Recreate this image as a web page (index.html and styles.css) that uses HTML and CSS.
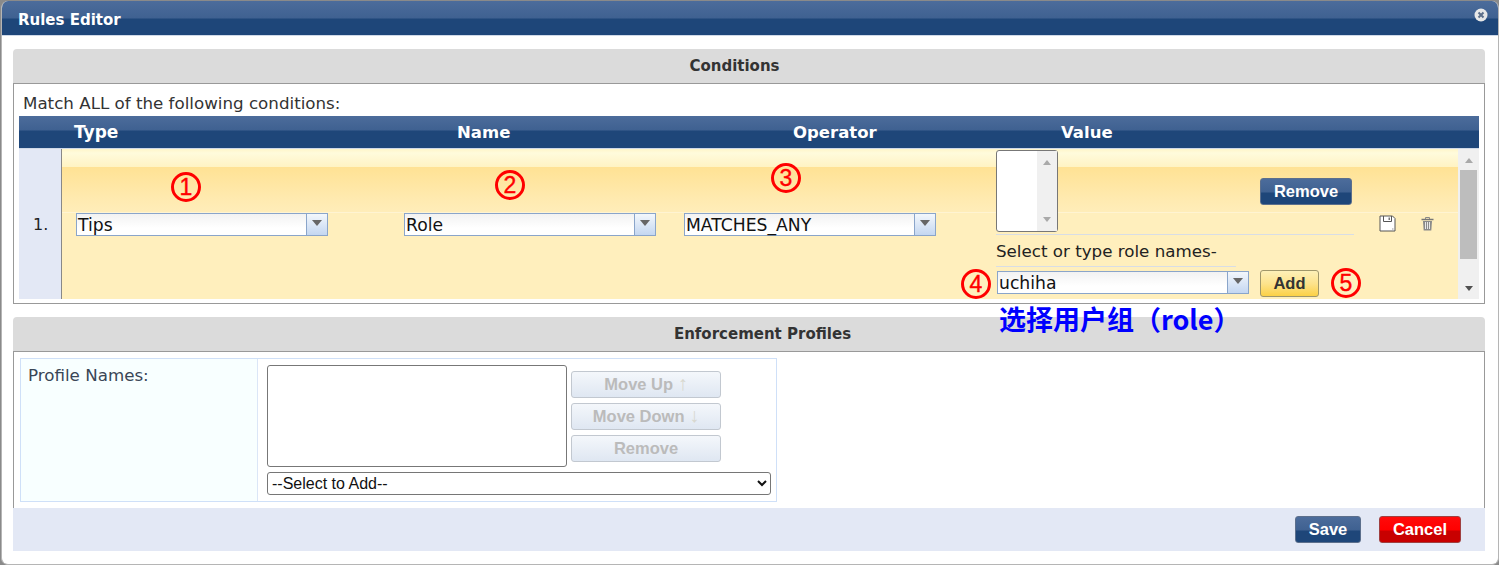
FILE: index.html
```html
<!DOCTYPE html>
<html lang="en">

<head>
    <meta charset="UTF-8">
    <meta name="viewport" content="width=device-width, initial-scale=1.0">
    <title>Rules Editor</title>
    <link rel="stylesheet" href="styles.css">
</head>

<body>
    <div class="dialog">
        <div class="title-bar">
            <span class="title">Rules Editor</span>
            <svg class="close-icon" width="14" height="14" viewBox="0 0 14 14">
                <circle cx="7" cy="7" r="6.5" fill="#e8e8e8" />
                <path d="M4.5 4.5l5 5M9.500 4.500l-5 5" stroke="#5d6f8a" stroke-width="2" />
            </svg>
        </div>

        <div class="section section-conditions">
            <div class="section-head">Conditions</div>
            <div class="section-body">
                <div class="match-text">Match ALL of the following conditions:</div>
                <div class="table-head">
                    <span class="th th-type">Type</span>
                    <span class="th th-name">Name</span>
                    <span class="th th-operator">Operator</span>
                    <span class="th">Value</span>
                </div>
                <div class="rule-row">
                    <div class="row-number">1.</div>
                    <div class="rule-cells">
                        <div class="cell cell-type">
                            <div class="combo"><span class="combo-text">Tips</span><span class="combo-arrow"></span></div>
                        </div>
                        <div class="cell cell-name">
                            <div class="combo"><span class="combo-text">Role</span><span class="combo-arrow"></span></div>
                        </div>
                        <div class="cell cell-operator">
                            <div class="combo"><span class="combo-text">MATCHES_ANY</span><span class="combo-arrow"></span></div>
                        </div>
                        <div class="cell-value">
                            <div class="value-top">
                                <div class="value-list">
                                    <div class="list-scroll">
                                        <span class="tri-up"></span>
                                        <span class="tri-down"></span>
                                    </div>
                                </div>
                                <button class="btn btn-blue btn-remove">Remove</button>
                            </div>
                            <div class="value-label">Select or type role names-</div>
                            <div class="value-add">
                                <div class="combo"><span class="combo-text">uchiha</span><span class="combo-arrow"></span></div>
                                <button class="btn btn-add">Add</button>
                            </div>
                        </div>
                        <div class="cell-icons">
                            <svg width="17" height="17" viewBox="0 0 17 17">
                                <path d="M1 1h12.500l2.500 2.500v12.500h-15z" fill="#fff" stroke="#555" />
                                <path d="M4.500 1v5.500h8v-5.500" fill="none" stroke="#555" />
                                <path d="M9.500 2.500v2.500h1.500v-2.500z" fill="#777" />
                                <path d="M13 14h1.500" stroke="#999" />
                            </svg>
                            <svg width="13" height="14" viewBox="0 0 13 14">
                                <path d="M0.500 2.500h12" stroke="#777" stroke-width="1.500" />
                                <path d="M4.500 2v-1.500h4v1.500" fill="none" stroke="#888" />
                                <path d="M2 4h9l-0.700 9.500h-7.600z" fill="#8a8a8a" />
                                <path d="M4.500 5v7M6.500 5v7M8.500 5v7" stroke="#e8e8e8" />
                            </svg>
                        </div>
                    </div>
                    <div class="row-scroll">
                        <span class="tri-up"></span>
                        <span class="row-thumb"></span>
                        <span class="tri-down tri-dark"></span>
                    </div>

                    <span class="mark mark-1">1</span>
                    <span class="mark mark-2">2</span>
                    <span class="mark mark-3">3</span>
                    <span class="mark mark-4">4</span>
                    <span class="mark mark-5">5</span>
                    <span class="role-note">选择用户组（role）</span>
                </div>
            </div>
        </div>

        <div class="section section-profiles">
            <div class="section-head">Enforcement Profiles</div>
            <div class="section-body profiles-body">
                <div class="profile-table">
                    <div class="profile-label">Profile Names:</div>
                    <div class="profile-field">
                        <div class="profile-top">
                            <div class="profile-list"></div>
                            <div class="profile-buttons">
                                <button class="btn btn-off">Move Up <span class="arrow-glyph">↑</span></button>
                                <button class="btn btn-off">Move Down <span class="arrow-glyph">↓</span></button>
                                <button class="btn btn-off">Remove</button>
                            </div>
                        </div>
                        <select class="profile-select">
                            <option>--Select to Add--</option>
                        </select>
                    </div>
                </div>
            </div>
        </div>

        <div class="footer">
            <button class="btn btn-blue btn-save">Save</button>
            <button class="btn btn-red">Cancel</button>
        </div>
    </div>
</body>

</html>
```

FILE: styles.css
```css
html,
body {
    margin: 0;
    height: 565px;
    overflow: hidden;
    background-color: #8a8a8a;
}

body {
    font-family: "DejaVu Sans", Verdana, sans-serif;
    color: #222;
}

.dialog {
    box-sizing: border-box;
    width: 1498px;
    height: 564px;
    margin: 1px 0 0 1px;
    background-color: #fff;
    border: 1px solid #b5b5b5;
    border-top: 0;
    border-radius: 7px;
    overflow: hidden;
}

.title-bar {
    display: flex;
    justify-content: space-between;
    height: 35px;
    padding: 0 10px 0 16px;
    background: linear-gradient(#4c6c9b, #3f6191 17px, #1e4679 18px);
    border-bottom: 1px solid #cfd9e8;
    box-sizing: border-box;
}

.title {
    font-size: 15px;
    font-weight: bold;
    line-height: 39px;
    color: #fff;
}

.close-icon {
    margin-top: 7px;
}

.section {
    margin: 0 13px 0 11px;
}

.section-conditions {
    margin-top: 13px;
}

.section-profiles {
    margin-top: 13px;
}

.section-head {
    height: 34px;
    background-color: #dbdbdb;
    border-radius: 4px 4px 0 0;
    font-size: 15px;
    font-weight: bold;
    line-height: 33px;
    text-align: center;
    color: #333;
}

.section-conditions .section-head {
    padding-right: 29px;
    line-height: 35px;
}

.section-profiles .section-head {
    padding-left: 27px;
    line-height: 35px;
}

.section-body {
    border: 1px solid #999;
    padding: 0 5px 4px;
    height: 221px;
    box-sizing: border-box;
}

.match-text {
    height: 32px;
    padding-left: 4px;
    font-size: 16.700px;
    line-height: 38px;
    color: #333;
}

.table-head {
    display: flex;
    height: 33px;
    padding-left: 55px;
    box-sizing: border-box;
    background: linear-gradient(#4c6c9b, #3f6191 14px, #1e4679 15px);
    border-bottom: 1px solid #cfd9e8;
}

.th {
    font-size: 16.500px;
    font-weight: bold;
    line-height: 33px;
    color: #fff;
}

.th-type {
    width: 383px;
    font-size: 17px;
}

.th-name {
    width: 336px;
}

.th-operator {
    width: 268px;
}

.rule-row {
    position: relative;
    display: flex;
    height: 150px;
}

.row-number {
    box-sizing: border-box;
    width: 43px;
    padding: 66px 0 0 14px;
    font-size: 16px;
    color: #222;
    background-color: #e3e8f5;
    border-right: 1px solid #888;
}

.rule-cells {
    flex: 1;
    display: flex;
    background: linear-gradient(#fff6c9, #fffbdc 4px, #fff3c3 18px, #ffe294 18px, #ffeab0 50px, #ffedb9 63px, #fff4d2 63px, #fff4d2 64px, #ffefbd 64px);
}

.cell {
    display: flex;
    align-items: center;
    padding: 1px 0 0 14px;
    box-sizing: border-box;
}

.cell-type {
    width: 328px;
}

.cell-name {
    width: 280px;
}

.cell-operator {
    width: 326px;
}

.combo {
    display: flex;
    box-sizing: border-box;
    width: 252px;
    height: 23px;
    background: linear-gradient(#f2f2f2, #fff 14px);
    border: 1px solid #8aa5ca;
}

.combo-text {
    flex: 1;
    font-size: 17.200px;
    line-height: 23px;
    color: #111;
    padding-left: 1px;
}

.combo-arrow {
    position: relative;
    width: 20px;
    background: linear-gradient(#f3f7fc, #c4d7f1);
    border-left: 1px solid #8aa5ca;
}

.combo-arrow::after {
    content: "";
    position: absolute;
    left: 5px;
    top: 6px;
    border: 5px solid transparent;
    border-top: 6px solid #666;
    border-bottom: 0;
}

.cell-value {
    width: 376px;
    padding-top: 1px;
    box-sizing: border-box;
}

.value-top {
    display: flex;
    align-items: center;
    width: 358px;
    height: 84px;
    border-bottom: 1px solid #d8dde6;
}

.value-list {
    display: flex;
    justify-content: flex-end;
    box-sizing: border-box;
    width: 62px;
    height: 82px;
    margin-bottom: 2px;
    background-color: #fff;
    border: 1px solid #777;
    border-radius: 3px;
}

.list-scroll {
    display: flex;
    flex-direction: column;
    justify-content: space-between;
    align-items: center;
    width: 20px;
    padding: 9px 0;
    box-sizing: border-box;
    background-color: #f0f0f0;
}

.tri-up,
.tri-down {
    display: block;
    border: 4px solid transparent;
}

.tri-up {
    border-bottom: 5px solid #a9a9a9;
    border-top: 0;
}

.tri-down {
    border-top: 5px solid #a9a9a9;
    border-bottom: 0;
}

.tri-dark {
    border-top-color: #505050;
}

.value-label {
    width: 240px;
    height: 31px;
    font-size: 16.700px;
    line-height: 32px;
    color: #222;
    white-space: nowrap;
    border-bottom: 1px solid #d8dde6;
}

.value-add {
    display: flex;
    align-items: flex-start;
    gap: 11px;
    padding: 3px 0 0 1px;
}

.value-add .combo {
    margin-top: 1px;
}

.btn {
    box-sizing: border-box;
    font-family: "Liberation Sans", Arial, sans-serif;
    font-size: 16.500px;
    font-weight: bold;
    padding: 0;
    border-radius: 3px;
    border: 1px solid #888;
}

.btn-blue {
    color: #fff;
    background: linear-gradient(#4c6c9b, #3f6191 13px, #1e4679 14px);
    border-color: #5c6f8c;
}

.btn-remove {
    width: 92px;
    height: 27px;
    margin: 0 0 2px 202px;
}

.btn-add {
    width: 59px;
    height: 27px;
    color: #333;
    background: linear-gradient(#fdf0b8, #fde28a 13px, #fcd146);
    border-color: #a0976a;
}

.cell-icons {
    display: flex;
    align-items: center;
    gap: 25px;
    padding: 0 0 1px 7px;
    height: 150px;
    box-sizing: border-box;
}

.row-scroll {
    display: flex;
    flex-direction: column;
    align-items: center;
    box-sizing: border-box;
    width: 21px;
    height: 150px;
    padding-top: 9px;
    background-color: #f0f0f0;
}

.row-thumb {
    width: 17px;
    height: 89px;
    margin: 7px 0 auto;
    background-color: #bdbdbd;
}

.row-scroll .tri-dark {
    margin-bottom: 8px;
}

.mark {
    position: absolute;
    box-sizing: border-box;
    width: 30px;
    height: 30px;
    font-family: "Liberation Sans", Arial, sans-serif;
    font-size: 23px;
    line-height: 24px;
    text-align: center;
    color: #f00;
    border: 3px solid #f00;
    border-radius: 50%;
    -webkit-text-stroke: 0.4px #f00;
}

.mark-1 {
    left: 152px;
    top: 23px;
}

.mark-2 {
    left: 476px;
    top: 21px;
}

.mark-3 {
    left: 752px;
    top: 14px;
}

.mark-4 {
    left: 942px;
    top: 120px;
}

.mark-5 {
    left: 1312px;
    top: 119px;
}

.role-note {
    position: absolute;
    left: 980px;
    top: 152px;
    font-family: "Noto Sans CJK SC", sans-serif;
    font-size: 27px;
    font-weight: bold;
    line-height: 36px;
    color: #00f;
    white-space: nowrap;
}

.profiles-body {
    height: 157px;
    padding: 6px 0 0 6px;
    border-bottom: 0;
}

.profile-table {
    display: flex;
    width: 757px;
    height: 144px;
    box-sizing: border-box;
    border: 1px solid #cfe0f8;
}

.profile-label {
    box-sizing: border-box;
    width: 237px;
    padding: 6px 0 0 7px;
    font-size: 16.700px;
    color: #3a4656;
    background-color: #f8ffff;
    border-right: 1px solid #dbe6f7;
}

.profile-field {
    padding: 6px 0 0 9px;
}

.profile-top {
    display: flex;
    gap: 4px;
}

.profile-list {
    box-sizing: border-box;
    width: 300px;
    height: 102px;
    background-color: #fff;
    border: 1px solid #777;
    border-radius: 3px;
}

.profile-buttons {
    display: flex;
    flex-direction: column;
    gap: 5px;
    padding-top: 6px;
}

.btn-off {
    width: 150px;
    height: 27px;
    color: #bbb;
    background: linear-gradient(#f4f7fb, #dfe7f2);
    border-color: #c2c8d0;
}

.arrow-glyph {
    font-size: 20px;
    line-height: 16px;
    font-weight: normal;
    color: #d8d8cf;
}

.profile-select {
    display: block;
    box-sizing: border-box;
    width: 504px;
    height: 23px;
    margin-top: 5px;
    padding: 0;
    font-family: "Liberation Sans", Arial, sans-serif;
    font-size: 16px;
    background-color: #fff;
    color: #111;
    border: 1px solid #767676;
    border-radius: 3px;
}

.footer {
    display: flex;
    justify-content: flex-end;
    align-items: flex-start;
    gap: 18px;
    height: 43px;
    margin: 0 13px 0 11px;
    padding: 8px 24px 0 0;
    box-sizing: border-box;
    background-color: #e3e8f5;
}

.btn-save {
    width: 66px;
    height: 27px;
}

.btn-red {
    width: 82px;
    height: 27px;
    color: #fff;
    background: linear-gradient(#ff0a0a, #f00 13px, #c80000 14px);
    border-color: #a04040;
}
```
